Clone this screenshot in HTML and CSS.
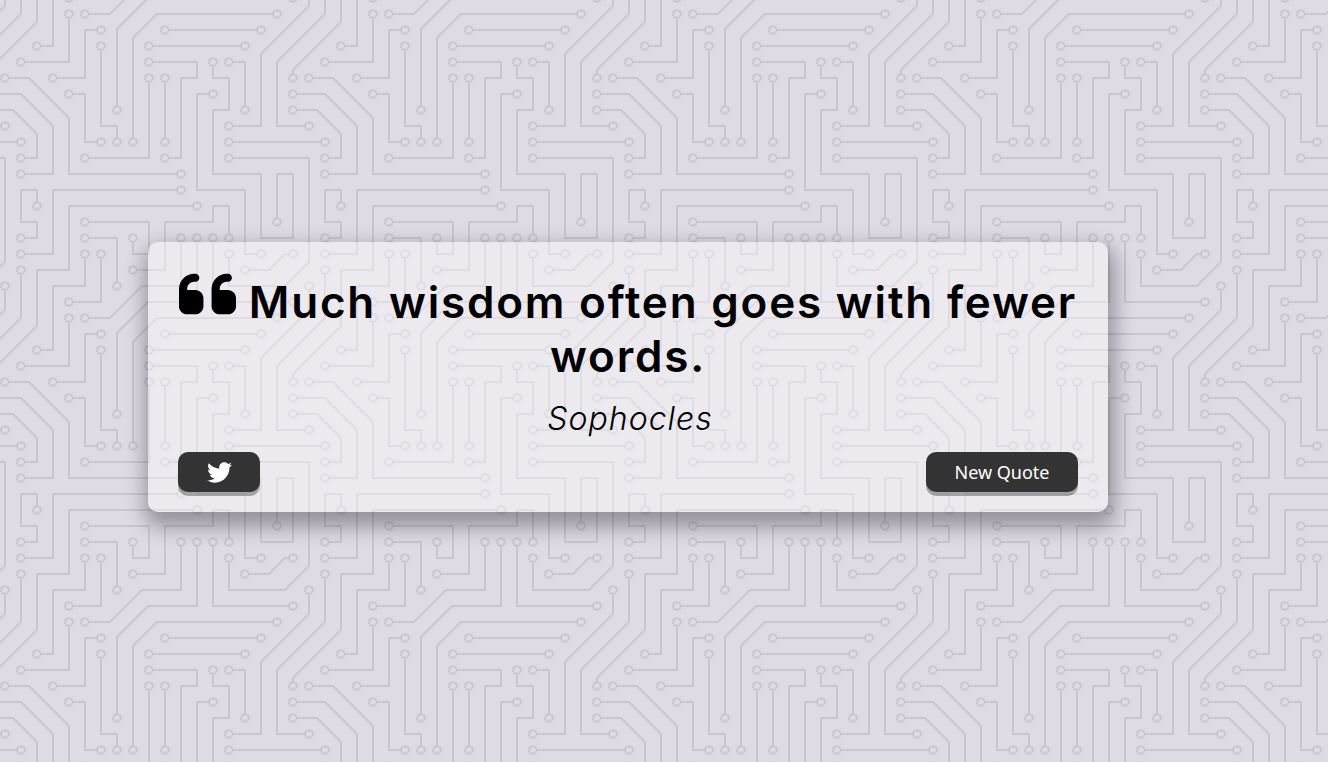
FILE: index.html
```html
<!DOCTYPE html>
<html lang="en">
<head>
    <meta charset="UTF-8">
    <meta name="viewport" content="width=device-width, initial-scale=1.0">
    <title>Quote Generator</title>
    <link rel="stylesheet" href="styles.css">
</head>
<body>
    <div class="quote-container">
        <div class="quote-text">
            <svg class="quote-icon" viewBox="0 96 448 320"><path d="M0 216C0 149.7 53.7 96 120 96h8c17.7 0 32 14.3 32 32s-14.3 32-32 32h-8c-30.9 0-56 25.1-56 56v8h64c35.3 0 64 28.7 64 64v64c0 35.3-28.7 64-64 64H64c-35.3 0-64-28.7-64-64V320 288 216zm256 0c0-66.3 53.7-120 120-120h8c17.7 0 32 14.3 32 32s-14.3 32-32 32h-8c-30.9 0-56 25.1-56 56v8h64c35.3 0 64 28.7 64 64v64c0 35.3-28.7 64-64 64H320c-35.3 0-64-28.7-64-64V320 288 216z"/></svg>
            <span id="quote">Much wisdom often goes with fewer words.</span>
        </div>
        <div class="quote-author">
            <span id="author">Sophocles</span>
        </div>
        <div class="button-container">
            <button class="twitter-button" id="twitter" title="Tweet This!">
                <svg class="twitter-icon" viewBox="0 0 512 512"><path d="M459.37 151.716c.325 4.548.325 9.097.325 13.645 0 138.72-105.583 298.558-298.558 298.558-59.452 0-114.68-17.219-161.137-47.106 8.447.974 16.568 1.299 25.34 1.299 49.055 0 94.213-16.568 130.274-44.832-46.132-.975-84.792-31.188-98.112-72.772 6.498.974 12.995 1.624 19.818 1.624 9.421 0 18.843-1.3 27.614-3.573-48.081-9.747-84.143-51.98-84.143-102.985v-1.299c13.969 7.797 30.214 12.67 47.431 13.319-28.264-18.843-46.781-51.005-46.781-87.391 0-19.492 5.197-37.36 14.294-52.954 51.655 63.675 129.3 105.258 216.365 109.807-1.624-7.797-2.599-15.918-2.599-24.04 0-57.828 46.782-104.934 104.934-104.934 30.213 0 57.502 12.67 76.67 33.137 23.715-4.548 46.456-13.32 66.599-25.34-7.798 24.366-24.366 44.833-46.132 57.827 21.117-2.273 41.584-8.122 60.426-16.243-14.292 20.791-32.161 39.308-52.628 54.253z"/></svg>
            </button>
            <button class="new-quote" id="new-quote">New Quote</button>
        </div>
    </div>
</body>
</html>
```

FILE: styles.css
```css
html {
    box-sizing: border-box;
}
body {
    margin: 0;
    min-height: 100vh;
    box-sizing: border-box;
    padding: 0 72px 8px 0;
    display: flex;
    align-items: center;
    justify-content: center;
    font-family: Inter, "Open Sans", sans-serif;
    background-color: #dfdbe5;
    background-image: url("data:image/svg+xml,%3Csvg xmlns='http://www.w3.org/2000/svg' xmlns:xlink='http://www.w3.org/1999/xlink' width='304' height='304' viewBox='0 0 912 912'%3E%3Cdefs%3E%3Cpath id='d' d='M207 42h0M63 186h0M303 762h0M207 906h0M255 954h0M543 714h0M303 90h0M159 234h0M303 138h0M351 426h0M591 714h0M351 1242h0M399 426h0M831 42h0M495 90h0M783 90h0M447 138h0M735 138h0M447 186h0M495 474h0M447 234h0M255 474h0M495 234h0M495 426h0M639 186h0M831 666h0M687 186h0M735 330h0M639 282h0M783 762h0M15 858h0M-225 1290h0M687 474h0M687 762h0M63 810h0M15 1290h0M591 618h0M-33 1146h0M543 570h0M63 762h0M255 762h0M111 1050h0M879 282h0M975 522h0M879 330h0M975 474h0M687 426h0M975 426h0M111 618h0M63 714h0M207 282h0M303 426h0M255 666h0M399 714h0M255 714h0M351 858h0M639 714h0M879 906h0M687 714h0M399 810h0M735 810h0M879 762h0M15 234h0M543 522h0'/%3E%3Cg id='t' fill='none' stroke-linecap='round'%3E%3Cpath stroke='%23cac6d1' stroke-width='6' stroke-linecap='butt' d='M207 42V186H63M303 762V906H207M255 954H330L426 858H543V714M303 90H255V234H159M303 138V378H351V426M591 714V906H444L351 999V1242M399 426V114L471 42H831M495 90H783M447 138H735M447 186H591V234H543V474H495M447 234V474H255M495 234V426M639 186V234H687V330H639V522H783V714H879V522H831V666M687 186H735V330M639 282H591V570H735V762H783M15 858V930L-129 1074V1290H-225M687 474H927V786L855 858H687V762M63 810V954L-81 1098V1290H15M591 618H207V810H111V978L-33 1122V1146M543 570H159V762H63M255 762V858H159V1050H111M879 282H975L1071 378V522H975M879 330H951L1023 402V474H975M687 426H975M111 618V570H63V666H111V714H63M207 282H255V426H303M255 666H447V762H399V714M255 714H351V858M639 714V906H879M687 714V618H639V666H495V810H399M735 810H807L855 762H879M15 234H87L207 354V522H543'/%3E%3Cuse xlink:href='%23d' stroke='%23cac6d1' stroke-width='29'/%3E%3Cuse xlink:href='%23d' stroke='%23dfdbe5' stroke-width='17'/%3E%3C/g%3E%3C/defs%3E%3Cuse xlink:href='%23t'/%3E%3Cuse xlink:href='%23t' x='-912'/%3E%3Cuse xlink:href='%23t' x='912'/%3E%3Cuse xlink:href='%23t' y='-912'/%3E%3Cuse xlink:href='%23t' x='-912' y='-912'/%3E%3Cuse xlink:href='%23t' x='912' y='-912'/%3E%3C/svg%3E");
}
.quote-container {
    width: 960px;
    height: 270px;
    box-sizing: border-box;
    padding: 31px 30px 0;
    border-radius: 10px;
    background: rgba(255, 255, 255, 0.4);
    box-shadow: 2px 10px 20px 5px rgba(0, 0, 0, 0.33);
}
.quote-text {
    font-size: 44px;
    font-weight: 600;
    line-height: 54px;
    letter-spacing: 1.8px;
    text-align: center;
    color: #000;
}
.quote-icon {
    width: 57px;
    height: 42px;
    vertical-align: 3px;
}
.quote-author {
    margin-top: 16px;
    padding-left: 4px;
    font-size: 32px;
    font-weight: 300;
    font-style: italic;
    line-height: 40px;
    letter-spacing: 1px;
    text-align: center;
    color: #000;
}
.button-container {
    margin-top: 13px;
    display: flex;
    justify-content: space-between;
}
button {
    height: 40px;
    padding: 0;
    border: none;
    border-radius: 10px;
    background: #333;
    color: #fff;
    font-family: "Noto Sans", sans-serif;
    font-size: 18px;
    box-shadow: 0 4px rgba(0, 0, 0, 0.3);
    cursor: pointer;
}
.twitter-button {
    width: 82px;
}
.twitter-icon {
    width: 25px;
    height: 25px;
    fill: #fff;
    vertical-align: middle;
}
.new-quote {
    width: 152px;
}
```
